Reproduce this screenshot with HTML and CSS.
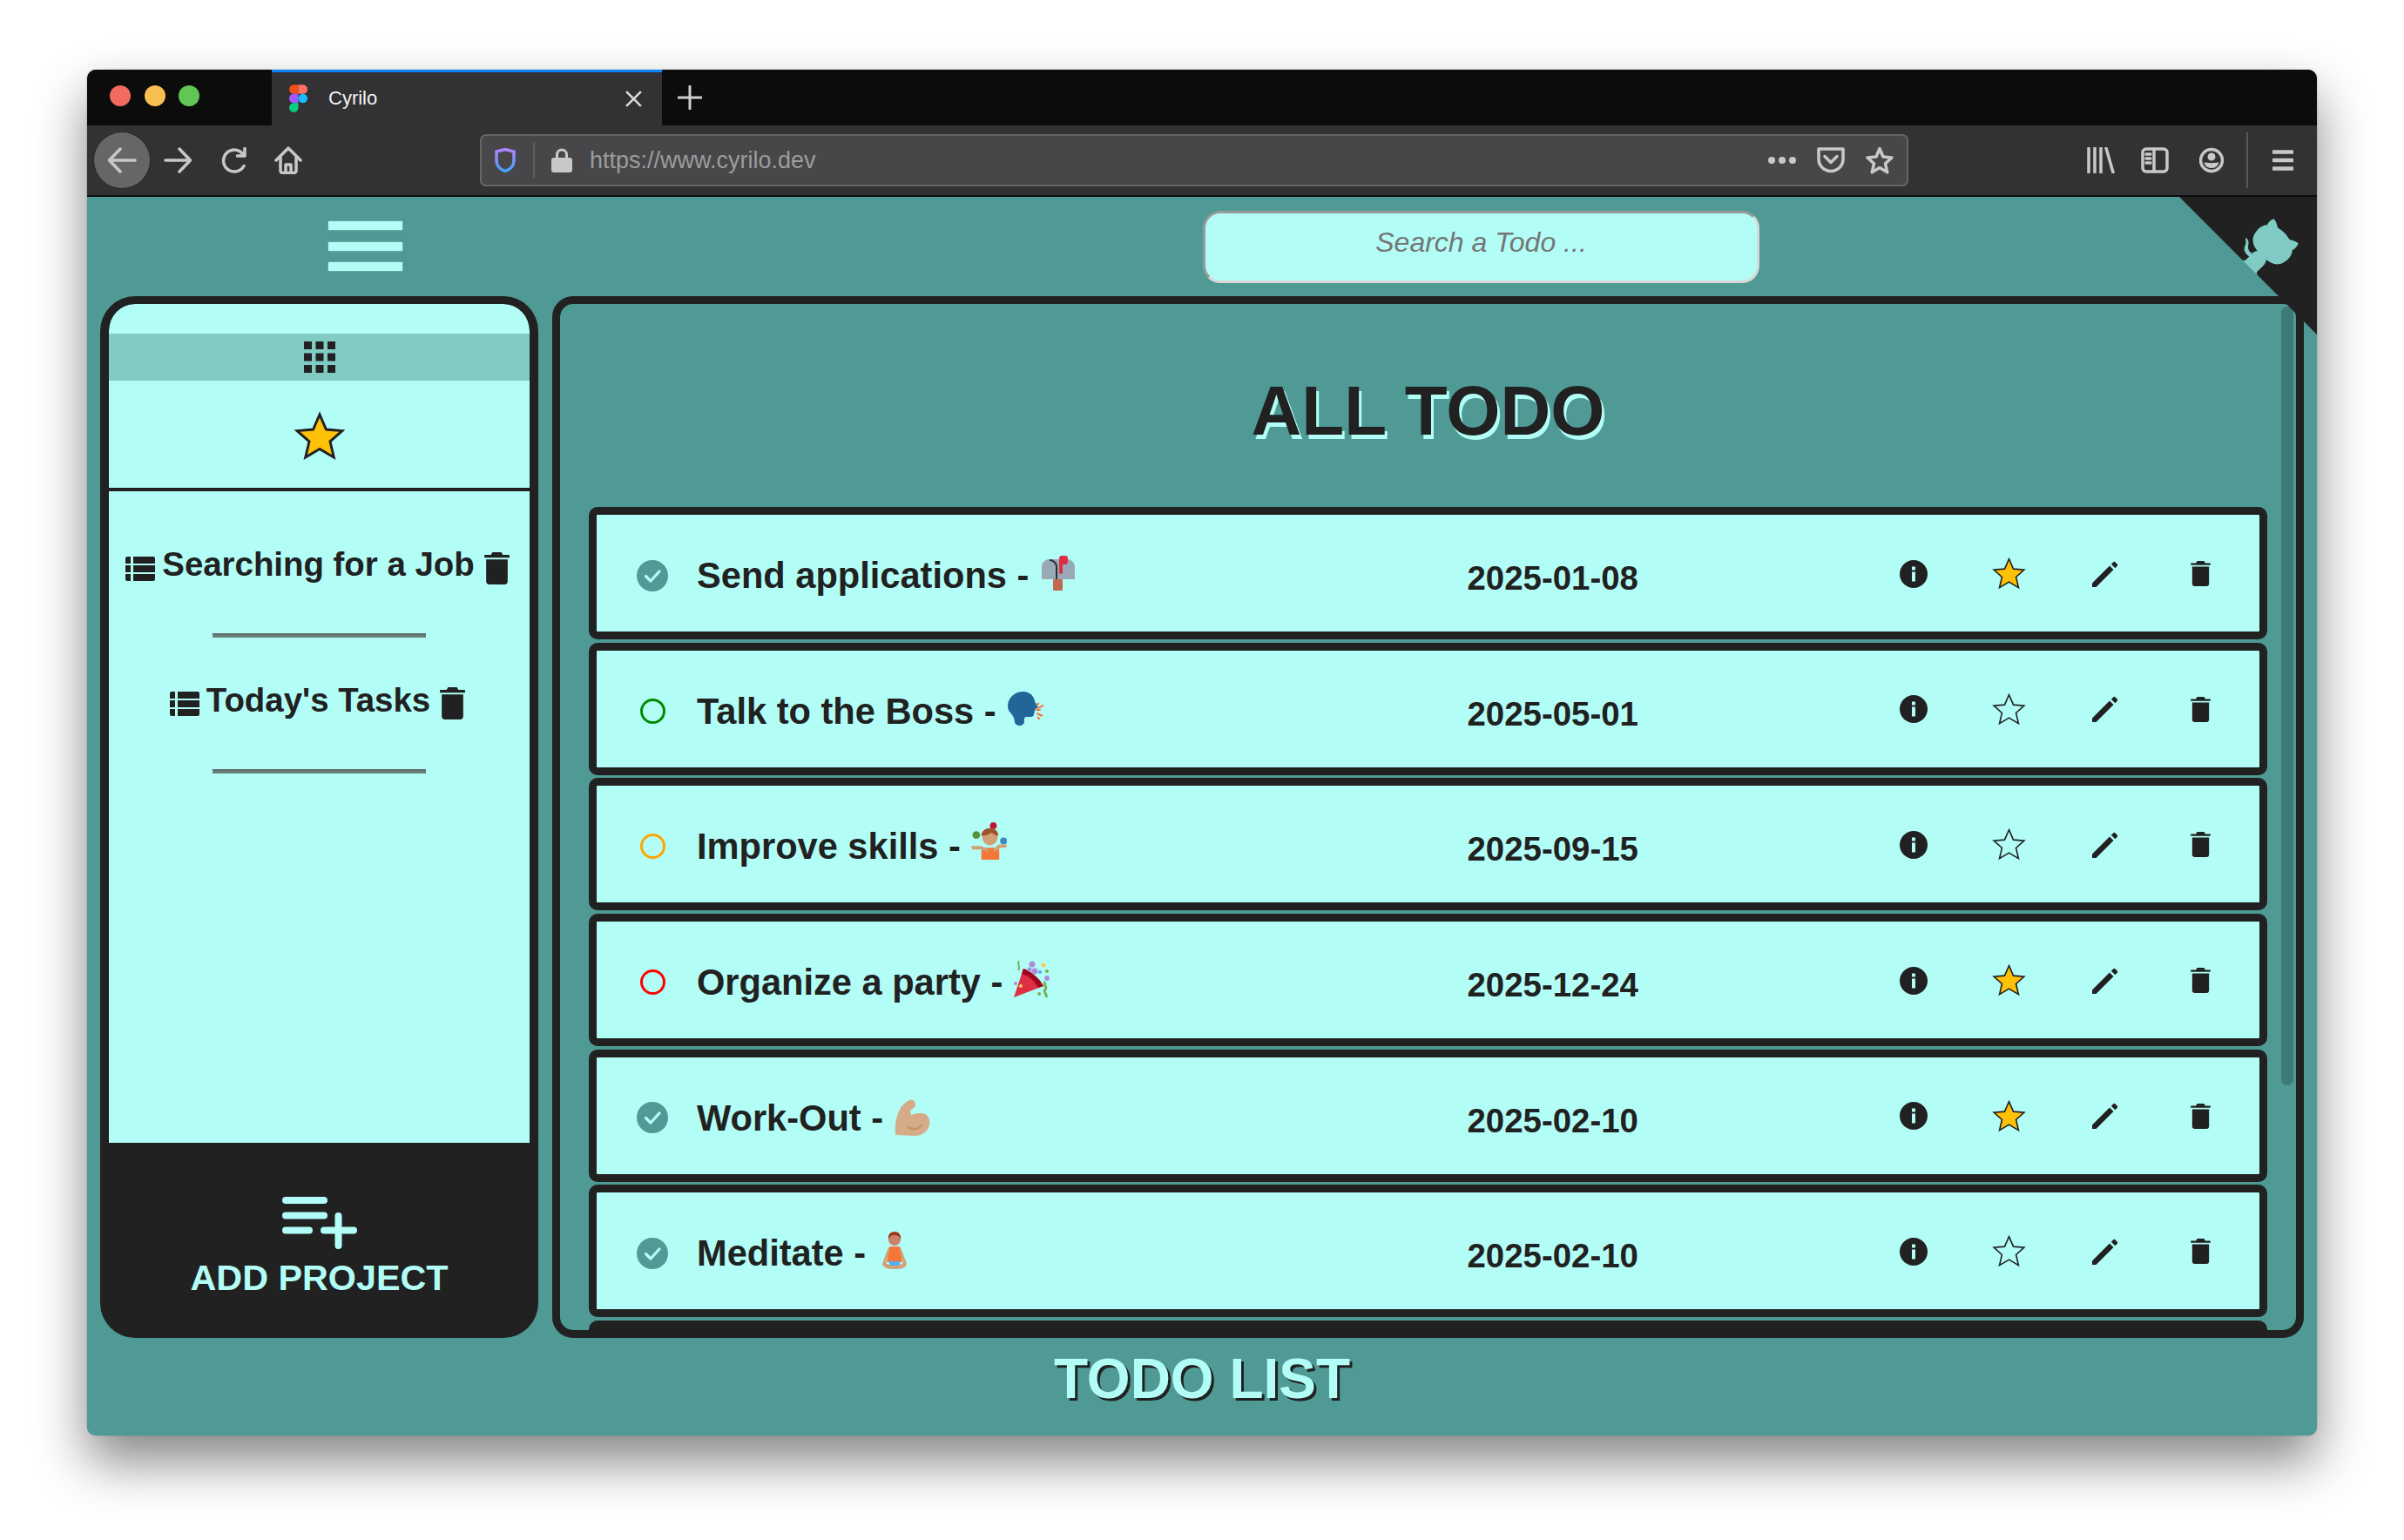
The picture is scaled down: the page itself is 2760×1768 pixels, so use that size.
FILE: index.html
```html
<!DOCTYPE html>
<html lang="en">
<head>
<meta charset="utf-8">
<title>Cyrilo</title>
<link rel="stylesheet" href="styles.css">
</head>
<body>
<svg class="sprites" width="0" height="0" aria-hidden="true">
  <symbol id="i-star" viewBox="0 0 24 24"><path d="M12 2.6 14.8 9l6.9.6-5.2 4.6 1.6 6.8-6.1-3.6L5.9 21l1.6-6.8L2.3 9.6 9.2 9z"/></symbol>
  <symbol id="i-info" viewBox="0 0 32 32"><circle cx="16" cy="16" r="16" fill="#212121"/><rect x="14" y="13.5" width="4" height="11" fill="#b2fef7"/><rect x="14" y="7.5" width="4" height="4" fill="#b2fef7"/></symbol>
  <symbol id="i-pen" viewBox="0 0 30 30"><path d="M0 30v-4.500L20 5.500l4.500 4.500L4.500 30z"/><path d="M21.800 3.700l2.300-2.300c.8-.8 1.700-.8 2.500 0l2 2c.8.8.8 1.700 0 2.500l-2.300 2.300z"/></symbol>
  <symbol id="i-trash" viewBox="5 3 14 18"><path d="M6 19.300C6 20.300 6.800 21 7.700 21h8.600c1 0 1.700-.7 1.700-1.700V7H6zM19 4.500h-3.700L14.500 3h-5l-.8 1.500H5V6h14z"/></symbol>
  <symbol id="i-list" viewBox="0 0 34 28"><path d="M0 2a2 2 0 0 1 2-2h4v8H0zM0 10h6v8H0zM0 20h6v8H2a2 2 0 0 1-2-2zM9 0h23a2 2 0 0 1 2 2v6H9zM9 10h25v8H9zM9 20h25v6a2 2 0 0 1-2 2H9z"/></symbol>
  <symbol id="i-check" viewBox="0 0 36 36"><circle cx="18" cy="18" r="18" fill="#4f9a94"/><path d="M10.500 18.500 16 24l10-11" fill="none" stroke="#b2fef7" stroke-width="3.200" stroke-linecap="round" stroke-linejoin="round"/></symbol>
</svg>

<div class="window">
  <div class="tabbar">
    <div class="lights"><span class="light red"></span><span class="light amber"></span><span class="light green"></span></div>
    <div class="tab">
      <svg class="figma" viewBox="0 0 20 30"><path d="M0 5a5 5 0 0 1 5-5h5v10H5a5 5 0 0 1-5-5z" fill="#f24e1e"/><path d="M10 0h5a5 5 0 0 1 0 10h-5z" fill="#ff7262"/><path d="M0 15a5 5 0 0 1 5-5h5v10H5a5 5 0 0 1-5-5z" fill="#a259ff"/><circle cx="15" cy="15" r="5" fill="#1abcfe"/><path d="M0 25a5 5 0 0 1 5-5h5v5a5 5 0 0 1-10 0z" fill="#0acf83"/></svg>
      <span class="tab-title">Cyrilo</span>
      <svg class="tab-close" viewBox="0 0 20 20"><path d="M2 2l16 16M18 2 2 18"/></svg>
    </div>
    <svg class="new-tab" viewBox="0 0 28 28"><path d="M14 1v26M1 14h26"/></svg>
  </div>

  <div class="toolbar">
    <div class="nav">
      <span class="back"><svg class="tool w34" viewBox="0 0 34 30"><path d="M32 15H3M15 2 2.500 15 15 28"/></svg></span>
      <svg class="tool w32 fwd" viewBox="0 0 32 30"><path d="M2 15h28M18 2l12.500 13L18 28"/></svg>
      <svg class="tool w32 reload" viewBox="0 0 32 30"><path d="M27 21.500A12.500 12.500 0 1 1 23.500 5.500L28 10M28 1.500V10h-8.500"/></svg>
      <svg class="tool w32 home" viewBox="0 0 32 32"><path d="M2 16 16 2 30 16M7 12.500V28a2.500 2.500 0 0 0 2.500 2.500h13A2.500 2.500 0 0 0 25 28V12.500M13 30V21h6v9"/></svg>
    </div>
    <div class="urlbar">
      <svg class="shield" viewBox="0 0 24 28"><defs><linearGradient id="sg" x1="0" y1="0" x2="0" y2="1"><stop offset="0" stop-color="#b083ff"/><stop offset="1" stop-color="#45a1ff"/></linearGradient></defs><path d="M2 4 12 1.500 22 4v10c0 7-5 11-10 12.500C7 25 2 21 2 14z" fill="none" stroke="url(#sg)" stroke-width="3.500"/><path d="M12 6.500v14" stroke="url(#sg)" stroke-width="3"/></svg>
      <span class="url-sep"></span>
      <svg class="lock" viewBox="0 0 24 28"><path d="M6.500 12V7.500a5.500 5.500 0 0 1 11 0V12" fill="none" stroke="#c8c8c8" stroke-width="3"/><rect y="11" width="24" height="17" rx="3" fill="#c8c8c8"/></svg>
      <span class="url">https://www.cyrilo.dev</span>
      <span class="url-dots"><i></i><i></i><i></i></span>
      <svg class="tool w32 pocket" viewBox="0 0 32 30"><path d="M2 2h28v12c0 7.500-6.500 13.500-14 13.500S2 21.500 2 14zM9 10.500l7 7 7-7"/></svg>
      <svg class="tool w32 bookmark" viewBox="0 0 32 32"><path d="M16 2.500l4 9.500 10 1-7.500 6.800 2.300 10L16 24.500l-8.800 5.300 2.300-10L2 13l10-1z"/></svg>
    </div>
    <div class="tools">
      <svg class="tool w32" viewBox="0 0 32 30"><path d="M2 1v28M9 1v28M16 1v28M22 1l8 28"/></svg>
      <svg class="tool w32 side-btn" viewBox="0 0 32 30"><rect x="2" y="2" width="28" height="26" rx="4"/><path d="M15 2v26M6 8h5M6 13h5M6 18h5"/></svg>
      <svg class="tool w28" viewBox="0 0 28 30"><circle cx="14" cy="15" r="12.500"/><circle cx="14" cy="11" r="4.500" fill="#c8c8c8" stroke="none"/><path d="M5.500 17c3 1.500 14 1.500 17 0-1 5-4.500 7-8.500 7s-7.500-2-8.500-7z" fill="#c8c8c8" stroke="none"/></svg>
      <span class="tool-sep"></span>
      <svg class="tool menu" viewBox="0 0 24 24"><path d="M1 2.500h22M1 12h22M1 21.500h22"/></svg>
    </div>
  </div>

  <div class="app">
    <a class="corner" aria-label="GitHub">
      <svg viewBox="0 0 250 250"><path class="corner-bg" d="M0,0 L115,115 L130,115 L142,142 L250,250 L250,0 Z"/><path class="corner-cat" d="M128.3,109.0 C113.8,99.7 119.0,89.6 119.0,89.6 C122.0,82.7 120.5,78.6 120.5,78.6 C119.2,72.0 123.4,76.3 123.4,76.3 C127.3,80.9 125.5,87.3 125.5,87.3 C122.9,97.6 130.6,101.9 134.4,103.2"/><path class="corner-cat" d="M115.0,115.0 C114.9,115.1 118.7,116.5 119.8,115.4 L133.7,101.6 C136.9,99.2 139.9,98.4 142.2,98.6 C133.8,88.0 127.5,74.4 143.8,58.0 C148.5,53.4 154.0,51.2 159.7,51.0 C160.3,49.4 163.2,43.6 171.4,40.1 C171.4,40.1 176.1,42.5 178.8,56.2 C183.1,58.6 187.2,61.8 190.9,65.4 C194.5,69.0 197.7,73.2 200.1,77.6 C213.8,80.2 216.3,84.9 216.3,84.9 C212.7,93.1 206.9,96.0 205.4,96.6 C205.1,102.4 203.0,107.8 198.3,112.5 C181.9,128.9 168.3,122.5 157.7,114.1 C157.9,116.9 156.7,120.9 152.7,124.9 L141.0,136.5 C139.8,137.7 141.6,141.9 141.8,141.8 Z"/></svg>
    </a>

    <header class="app-header">
      <div class="burger"><span></span><span></span><span></span></div>
      <div class="search"><span class="search-hint">Search a Todo ...</span></div>
    </header>

    <div class="app-body">
      <aside class="sidebar">
        <div class="side-top">
          <div class="band"><svg class="grid-icon" viewBox="0 0 36 36"><path d="M0 0h9v9H0zM13.500 0h9v9h-9zM27 0h9v9h-9zM0 13.500h9v9H0zM13.500 13.500h9v9h-9zM27 13.500h9v9h-9zM0 27h9v9H0zM13.500 27h9v9h-9zM27 27h9v9h-9z"/></svg></div>
          <div class="fav"><svg class="star star-lg"><use href="#i-star"/></svg></div>
          <div class="projects">
            <div class="project">
              <div class="project-row"><svg class="list-icon"><use href="#i-list"/></svg><span class="project-name">Searching for a Job</span><svg class="side-trash"><use href="#i-trash"/></svg></div>
              <div class="rule"></div>
            </div>
            <div class="project">
              <div class="project-row"><svg class="list-icon"><use href="#i-list"/></svg><span class="project-name">Today's Tasks</span><svg class="side-trash"><use href="#i-trash"/></svg></div>
              <div class="rule"></div>
            </div>
          </div>
        </div>
        <div class="add-project">
          <svg class="add-icon" viewBox="0 0 86 60"><path d="M4 4H48M4 21.500H48M4 38.500H31M48 38.500H82M64.500 22V56"/></svg>
          <span class="add-label">ADD PROJECT</span>
        </div>
      </aside>

      <main class="panel">
        <h1 class="panel-title">ALL TODO</h1>

        <div class="todo">
          <svg class="status"><use href="#i-check"/></svg>
          <span class="todo-title">Send applications -</span>
          <svg class="emoji e-mail" viewBox="0 0 40 40"><path d="M2 12a9 9 0 0 1 9-8h20a9 9 0 0 1 9 8v15H2z" fill="#9aaab4"/><path d="M11 4a9 9 0 0 1 9 8v15h-2V12a7 7 0 0 0-7-6z" fill="#292f33"/><rect x="15" y="27" width="11" height="13" rx="1" fill="#c1694f"/><path d="M22 3a3 3 0 0 1 3-3h4a3 3 0 0 1 3 3v4a3 3 0 0 1-3 3h-3v9a2 2 0 0 1-4 0z" fill="#dd2e44"/></svg>
          <span class="todo-date">2025-01-08</span>
          <div class="actions"><span class="act"><svg class="ico-info"><use href="#i-info"/></svg></span><span class="act"><svg class="star star-on"><use href="#i-star"/></svg></span><span class="act"><svg class="ico-pen"><use href="#i-pen"/></svg></span><span class="act"><svg class="ico-trash"><use href="#i-trash"/></svg></span></div>
        </div>

        <div class="todo">
          <span class="status ring ring-green"></span>
          <span class="todo-title">Talk to the Boss -</span>
          <svg class="emoji e-talk" viewBox="3 0 37 40" preserveAspectRatio="none"><path d="M3 17C3 6 11 0 19 0c7 0 11 5 12 11 .2 1.500 3 5 3 7 0 1-2 1.500-2.500 2 0 1-.5 2-1 2.500.5 1 .3 2-.5 2.500.3 2-.5 4-3 4H22c-1 0-2 1-2 3v3c0 2-2 4-5 4-2 0-5-2-5-5 0-3-1-5-3-8-2-3-4-5-4-9z" fill="#226699"/><path d="M40 16l-6 3M37 21h-5M39 28l-6-3M33 16l2-3M34 29l2 3" stroke="#f4773a" stroke-width="2" fill="none"/></svg>
          <span class="todo-date">2025-05-01</span>
          <div class="actions"><span class="act"><svg class="ico-info"><use href="#i-info"/></svg></span><span class="act"><svg class="star star-off"><use href="#i-star"/></svg></span><span class="act"><svg class="ico-pen"><use href="#i-pen"/></svg></span><span class="act"><svg class="ico-trash"><use href="#i-trash"/></svg></span></div>
        </div>

        <div class="todo">
          <span class="status ring ring-amber"></span>
          <span class="todo-title">Improve skills -</span>
          <svg class="emoji e-juggle" viewBox="0 0 44 44"><circle cx="6" cy="15" r="4.500" fill="#5c913b"/><circle cx="26" cy="4" r="4" fill="#be1931"/><circle cx="38" cy="22" r="4" fill="#3b88c3"/><path d="M12 44V34c0-3 4-4 8-4h6c4 0 7 1 7 4v10z" fill="#f4773a"/><path d="M0 28h12l8 4v3l-9-3H1zM42 26H32l-6 6 1 3 8-5h6z" fill="#d2a077"/><circle cx="22" cy="18" r="9" fill="#d2a077"/><path d="M12 16c0-6 5-9 10-9s10 3 10 9c-2 0-6-2-8-4-2 2-8 4-12 4z" fill="#a0522d"/></svg>
          <span class="todo-date">2025-09-15</span>
          <div class="actions"><span class="act"><svg class="ico-info"><use href="#i-info"/></svg></span><span class="act"><svg class="star star-off"><use href="#i-star"/></svg></span><span class="act"><svg class="ico-pen"><use href="#i-pen"/></svg></span><span class="act"><svg class="ico-trash"><use href="#i-trash"/></svg></span></div>
        </div>

        <div class="todo">
          <span class="status ring ring-red"></span>
          <span class="todo-title">Organize a party -</span>
          <svg class="emoji e-party" viewBox="0 0 44 44"><path d="M1 42 12 9l23 20z" fill="#dd2e44"/><path d="M12 9c7 2 19 11 23 20l-6 2C25 23 18 17 10 15z" fill="#a0041e"/><path d="M7 0C4 4 9 6 6 11" stroke="#77b255" stroke-width="2" fill="none"/><path d="M37 24c-3 4 3 5 0 9s3 5 1 9" stroke="#77b255" stroke-width="3" fill="none"/><circle cx="22" cy="4" r="3.500" fill="#aa8dd8"/><circle cx="25" cy="12" r="3.500" fill="#aa8dd8"/><circle cx="39" cy="20" r="3" fill="#aa8dd8"/><circle cx="19" cy="10" r="2.500" fill="#aa8dd8"/><circle cx="35" cy="5" r="2.500" fill="#fdcb58"/><circle cx="9" cy="29" r="2" fill="#ffcc4d"/><circle cx="39" cy="12" r="2" fill="#77b255"/><circle cx="31" cy="13" r="2" fill="#55acee"/><circle cx="30" cy="38" r="2" fill="#77b255"/><circle cx="3" cy="26" r="2" fill="#aa8dd8"/></svg>
          <span class="todo-date">2025-12-24</span>
          <div class="actions"><span class="act"><svg class="ico-info"><use href="#i-info"/></svg></span><span class="act"><svg class="star star-on"><use href="#i-star"/></svg></span><span class="act"><svg class="ico-pen"><use href="#i-pen"/></svg></span><span class="act"><svg class="ico-trash"><use href="#i-trash"/></svg></span></div>
        </div>

        <div class="todo">
          <svg class="status"><use href="#i-check"/></svg>
          <span class="todo-title">Work-Out -</span>
          <svg class="emoji e-arm" viewBox="0 0 41 42"><path d="M1 41C0 25 3 8 17 1c4-1 7 1 7 5 0 3-3 5-6 7l1 5c5-2 12-3 16-1 4 2 6 7 5 12-1 7-7 12-15 13z" fill="#d5ab88"/><path d="M15 31c5 5 13 4 16-2" stroke="#c49563" stroke-width="2.500" fill="none"/></svg>
          <span class="todo-date">2025-02-10</span>
          <div class="actions"><span class="act"><svg class="ico-info"><use href="#i-info"/></svg></span><span class="act"><svg class="star star-on"><use href="#i-star"/></svg></span><span class="act"><svg class="ico-pen"><use href="#i-pen"/></svg></span><span class="act"><svg class="ico-trash"><use href="#i-trash"/></svg></span></div>
        </div>

        <div class="todo">
          <svg class="status"><use href="#i-check"/></svg>
          <span class="todo-title">Meditate -</span>
          <svg class="emoji e-lotus" viewBox="0 0 30 44"><path d="M9 17h12l3 18H6z" fill="#f4773a"/><path d="M9 34h12v5H9z" fill="#55acee"/><path d="M8 18 2 34c-2 4 0 6 2 7 3 2 8 2 11 2s8 0 11-2c2-1 4-3 2-7l-6-16-1 4 4 13c0 2-5 4-10 4S5 37 5 35l4-13z" fill="#d2a077"/><circle cx="15" cy="9" r="7" fill="#c9826a"/><path d="M8 9c-1-6 3-9 7-9s8 3 7 9c-1-3-3-5-7-5S9 6 8 9z" fill="#a0331a"/></svg>
          <span class="todo-date">2025-02-10</span>
          <div class="actions"><span class="act"><svg class="ico-info"><use href="#i-info"/></svg></span><span class="act"><svg class="star star-off"><use href="#i-star"/></svg></span><span class="act"><svg class="ico-pen"><use href="#i-pen"/></svg></span><span class="act"><svg class="ico-trash"><use href="#i-trash"/></svg></span></div>
        </div>

        <div class="todo todo-peek"></div>
        <div class="scrollbar"></div>
      </main>
    </div>

    <footer class="app-footer">TODO LIST</footer>
  </div>
</div>
</body>
</html>
```

FILE: styles.css
```css
* { box-sizing: border-box; }
html, body { margin: 0; padding: 0; background: #fff; }
body { width: 2760px; height: 1768px; overflow: hidden; padding: 80px 100px 0; font-family: "Liberation Sans", Arial, sans-serif; color: #212121; }
.sprites { position: absolute; }
svg { display: block; flex: none; }

.window { width: 2560px; height: 1568px; border-radius: 10px; overflow: hidden; display: flex; flex-direction: column; background: #4f9a94; box-shadow: 0 30px 60px 0 rgba(0,0,0,.48), 0 0 2px rgba(0,0,0,.3); }

/* browser chrome */
.tabbar { height: 64px; background: #0c0c0d; display: flex; align-items: stretch; flex: none; }
.lights { width: 212px; display: flex; gap: 15.500px; padding: 18px 0 0 26px; }
.light { width: 24px; height: 24px; border-radius: 50%; }
.red { background: #f26a60; } .amber { background: #f6bf50; } .green { background: #62c655; }
.tab { width: 448px; background: #323234; border-top: 3px solid #0a84ff; display: flex; align-items: center; padding-left: 20px; }
.figma { width: 21px; height: 32px; margin-top: -2px; }
.tab-title { color: #f2f2f2; font-size: 22px; margin: -2px 0 0 24px; flex: 1; }
.tab-close { width: 21px; height: 21px; margin-right: 22px; fill: none; stroke: #d8d8d8; stroke-width: 2.500; }
.new-tab { width: 28px; height: 28px; margin: 18px 0 0 18px; fill: none; stroke: #d0d0d0; stroke-width: 3; stroke-linecap: round; }

.toolbar { height: 82px; background: #323234; border-bottom: 2px solid #0c0c0d; display: flex; align-items: center; flex: none; }
.tool { fill: none; stroke: #c8c8c8; stroke-width: 3.500; stroke-linecap: round; stroke-linejoin: round; }
.w34 { width: 34px; height: 30px; } .w32 { width: 32px; height: 30px; } .w28 { width: 28px; height: 30px; }
.nav { display: flex; align-items: center; width: 451px; padding-left: 8px; }
.back { width: 64px; height: 64px; border-radius: 50%; background: #666; box-shadow: 0 0 0 1px #2a2a2a; display: flex; align-items: center; justify-content: center; }
.fwd { margin-left: 16px; }
.reload { margin-left: 33px; }
.home { margin-left: 30px; height: 32px; }
.urlbar { width: 1640px; height: 60px; background: #474749; border: 2px solid #666; border-radius: 7px; display: flex; align-items: center; padding-left: 15px; }
.shield { width: 24px; height: 28px; }
.url-sep { width: 2px; height: 40px; background: #5e5e60; margin: 0 19px 0 20px; }
.lock { width: 24px; height: 28px; }
.url { color: #9c9c9c; font-size: 27px; margin-left: 20px; flex: 1; }
.url-dots { display: flex; gap: 4px; }
.url-dots i { display: block; width: 8px; height: 8px; border-radius: 50%; background: #c8c8c8; }
.pocket { margin-left: 24px; }
.bookmark { margin: 0 15px 0 24px; height: 32px; }
.tools { display: flex; align-items: center; padding-left: 205px; }
.side-btn { margin-left: 30px; }
.tools .w28 { margin-left: 35px; }
.tool-sep { width: 2px; height: 64px; background: #58585a; margin: 0 28px 0 26px; }
.menu { width: 24px; height: 24px; stroke-width: 4.500; }

/* app */
.app { flex: 1; position: relative; display: flex; flex-direction: column; background: #4f9a94; overflow: hidden; }
.corner { position: absolute; top: 0; right: 0; width: 158px; height: 158px; z-index: 3; }
.corner svg { width: 158px; height: 158px; }
.corner-bg { fill: #212121; }
.corner-cat { fill: #80cbc4; }

.app-header { height: 114px; display: flex; align-items: flex-start; padding-left: 277px; flex: none; }
.burger { width: 85px; margin-top: 28px; display: flex; flex-direction: column; gap: 13.500px; }
.burger span { display: block; height: 10px; background: #b2fef7; box-shadow: 0 0 2px rgba(178,254,247,.5); }
.search { width: 639px; height: 83px; margin: 16px 0 0 919px; background: #b2fef7; border-radius: 20px; border-style: solid; border-width: 3px; border-color: #9a9a9a #d8d8d8 #d8d8d8 #9a9a9a; text-align: center; padding-top: 14px; }
.search-hint { font-style: italic; font-size: 32px; line-height: 38px; color: #757575; display: block; }

.app-body { height: 1196px; display: flex; gap: 16px; padding: 0 15px; flex: none; }
.sidebar { width: 503px; border-radius: 40px; background: #212121; border: 10px solid #212121; border-top-width: 9px; display: flex; flex-direction: column; overflow: hidden; }
.side-top { height: 963px; background: #b2fef7; border-radius: 30px 30px 0 0; flex: none; overflow: hidden; padding-top: 34px; }
.band { height: 54px; background: #80cbc4; display: flex; align-items: center; justify-content: center; }
.grid-icon { width: 36px; height: 36px; fill: #212121; }
.fav { height: 127px; border-bottom: 4px solid #212121; display: flex; justify-content: center; padding-top: 32px; }
.star { stroke: #212121; stroke-linejoin: miter; }
.star-lg { width: 64px; height: 64px; fill: #ffc107; stroke-width: 1.100; }
.projects { padding-top: 12.500px; }
.project { padding-top: 49.500px; }
.project-row { display: flex; align-items: center; justify-content: center; height: 44px; padding-right: 4px; }
.project-name { font-weight: 700; font-size: 38.400px; line-height: 44px; margin: 0 11px 0 8px; }
.list-icon { width: 34px; height: 28px; fill: #212121; margin-top: 9px; }
.side-trash { width: 29px; height: 37px; fill: #212121; margin-top: 8px; }
.rule { width: 245px; height: 5px; margin: 57px auto 0; background: #6b7f7d; border-top: 2px solid #5f6e6c; }
.add-project { flex: 1; display: flex; flex-direction: column; align-items: center; padding-top: 62px; color: #b2fef7; }
.add-icon { width: 86px; height: 60px; fill: none; stroke: #b2fef7; stroke-width: 8; stroke-linecap: round; }
.add-label { font-weight: 700; font-size: 41.300px; line-height: 47px; margin-top: 10px; }

.panel { flex: 1; position: relative; border: 9px solid #212121; border-radius: 24px; overflow: hidden; padding: 0 33px; }
.panel-title { margin: 77px 0 64px; text-align: center; font-weight: 700; font-size: 80px; line-height: 92px; color: #212121; text-shadow: 3px 5px 0 #b2fef7; }
.todo { height: 152px; margin-bottom: 3.700px; background: #b2fef7; border: 9.500px solid #212121; border-radius: 10px; display: flex; align-items: center; padding-left: 46px; }
.todo-peek { background: #212121; }
.status { width: 36px; height: 36px; margin: 5px 33px 0 0; flex: none; }
.ring { width: 29px; height: 29px; border-radius: 50%; border: 3px solid; margin: 5px 36.500px 0 3.500px; }
.ring-green { border-color: #008a00; }
.ring-amber { border-color: #ffa500; }
.ring-red { border-color: #ff0000; }
.todo-title { font-weight: 700; font-size: 41.600px; line-height: 48px; margin-top: 6px; white-space: nowrap; }
.emoji { width: 40px; height: 40px; margin-left: 13px; }
.e-talk { width: 41px; }
.e-juggle { width: 43px; height: 43px; margin: -8px 0 0 12px; }
.e-party { width: 44px; height: 44px; margin-left: 12px; }
.e-arm { width: 41px; height: 42px; margin-top: 4px; }
.e-lotus { width: 30px; height: 44px; margin-left: 18px; }
.todo-date { font-weight: 700; font-size: 38.400px; line-height: 44px; margin: 12px 0 0 auto; width: 457px; white-space: nowrap; }
.actions { display: flex; align-items: center; margin-top: 1px; padding-right: 12.500px; }
.act { width: 110px; display: flex; justify-content: center; }
.ico-info { width: 32px; height: 32px; }
.star-on { width: 43px; height: 43px; fill: #ffc107; stroke-width: .9; }
.star-off { width: 43px; height: 43px; fill: none; stroke-width: .9; }
.ico-pen { width: 30px; height: 30px; fill: #212121; }
.ico-trash { width: 23px; height: 29px; fill: #212121; }
.scrollbar { position: absolute; top: 3px; right: 3px; width: 14px; height: 894px; border-radius: 7px; background: #3f7b76; }

.app-footer { flex: 1; text-align: center; font-weight: 700; font-size: 64px; line-height: 74px; padding-top: 10px; color: #b2fef7; text-shadow: 3px 3px 0 #212121; }
```
